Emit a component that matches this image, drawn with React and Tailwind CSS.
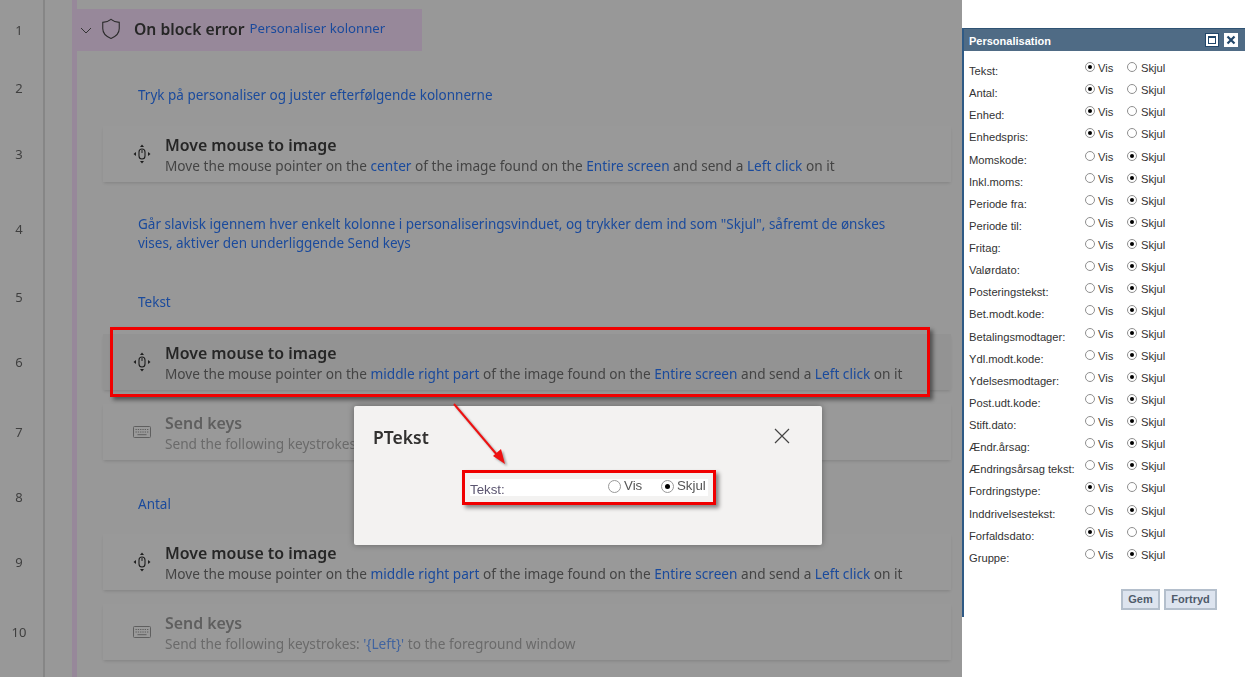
const font = { fontFamily: '"Noto Sans", sans-serif' };

function MouseIcon() {
  return (
    <svg width="18" height="20" viewBox="0 0 18 20" className="shrink-0 text-[#1e1e1e]">
      <rect x="6" y="5" width="6" height="10" rx="3" fill="none" stroke="currentColor" strokeWidth="1.1" />
      <path d="M9 6v3" stroke="currentColor" strokeWidth="1" />
      <path d="M9 0.5l2 2.5H7zM9 19.500l2-2.500H7zM0.500 10L3 8v4zM17.500 10L15 8v4z" fill="currentColor" />
    </svg>
  );
}

function KeyboardIcon() {
  return (
    <svg width="18" height="12" viewBox="0 0 18 12" className="shrink-0 text-[#5f5f5f]">
      <rect x="0.5" y="0.5" width="17" height="11" rx="1" fill="none" stroke="currentColor" />
      <path d="M2.5 3.5h13M2.5 6h13" stroke="currentColor" strokeDasharray="1.3 1" />
      <path d="M4.5 8.7h9" stroke="currentColor" />
    </svg>
  );
}

function Row({ n, h, children }) {
  return (
    <div className={`flex ${h}`}>
      <div className="w-[45px] shrink-0 border-r-2 border-[#868686] flex items-center justify-center pr-[5px] pt-[2px] text-[13px] text-[#3f3f3f]">
        {n}
      </div>
      <div className="w-[27px] shrink-0" />
      <div className="flex-1 min-w-0 border-l-[5px] border-[#97889a] relative flex items-center">{children}</div>
    </div>
  );
}

function Comment({ pt, children }) {
  return <div className={`pl-[61px] pr-[50px] text-[13.5px] leading-[19px] text-[#1a4a9c] ${pt}`}>{children}</div>;
}

function Action({ icon, title, muted, selected, children }) {
  return (
    <div className={`ml-[26px] h-[56px] w-[848px] flex items-center pl-[28px] shadow-[0_2px_3px_-1px_rgba(0,0,0,0.15)] ${selected ? 'bg-[#939393]' : 'bg-[#999999]'}`}>
      <div className="w-[22px] flex justify-center shrink-0">{icon}</div>
      <div className="ml-[12px] min-w-0 pt-[2px]">
        <div className={`text-[15.9px] leading-[21px] font-semibold ${muted ? 'text-[#5f5f5f]' : 'text-[#262626]'}`}>{title}</div>
        <div className={`text-[13.65px] leading-[20px] whitespace-nowrap ${muted ? 'text-[#6a6a6a]' : 'text-[#444444]'}`}>{children}</div>
      </div>
    </div>
  );
}

const B = ({ children }) => <span className="text-[#1a4a9c]">{children}</span>;

const panelRows = [
  ['Tekst:', 1], ['Antal:', 1], ['Enhed:', 1], ['Enhedspris:', 1], ['Momskode:', 0], ['Inkl.moms:', 0],
  ['Periode fra:', 0], ['Periode til:', 0], ['Fritag:', 0], ['Valørdato:', 0], ['Posteringstekst:', 0],
  ['Bet.modt.kode:', 0], ['Betalingsmodtager:', 0], ['Ydl.modt.kode:', 0], ['Ydelsesmodtager:', 0],
  ['Post.udt.kode:', 0], ['Stift.dato:', 0], ['Ændr.årsag:', 0], ['Ændringsårsag tekst:', 0],
  ['Fordringstype:', 1], ['Inddrivelsestekst:', 0], ['Forfaldsdato:', 1], ['Gruppe:', 0],
];

function Radio({ on }) {
  return (
    <span className="w-[10px] h-[10px] rounded-full border border-[#8f8f8f] bg-white flex items-center justify-center shrink-0">
      {on ? <span className="w-[4px] h-[4px] rounded-full bg-black" /> : null}
    </span>
  );
}

function PanelRow({ label, vis }) {
  return (
    <div className="h-[22.14px] flex text-[11.2px] leading-[13px]">
      <div className="w-[121px] pl-[5px] pt-[3px] text-[#333333] whitespace-nowrap">{label}</div>
      <div className="w-[42px] flex items-start gap-[3px] text-[#333333]"><Radio on={vis} />Vis</div>
      <div className="flex items-start gap-[4px] text-[#333333]"><Radio on={!vis} />Skjul</div>
    </div>
  );
}

export default function App() {
  return (
    <div className="relative w-[1245px] h-[677px] overflow-hidden bg-white flex" style={font}>
      <div className="relative w-[962px] h-full shrink-0 bg-[#989898] overflow-hidden blur-[0.3px]">
        <Row n={1} h="h-[60px]">
          <div className="absolute left-[-5px] top-[9px] w-[350px] h-[42px] bg-[#97889a] flex items-center pl-[8px]">
            <svg width="12" height="12" viewBox="0 0 12 12" className="text-[#333]">
              <path d="M1 4l5 5 5-5" fill="none" stroke="currentColor" strokeWidth="1" />
            </svg>
            <svg width="22" height="22" viewBox="0 0 20 20" className="ml-[8px] mb-[3px] text-[#2b2b2b]">
              <path d="M10 1.200c2.200 1.800 4.600 2.700 7.500 2.800v5.600c0 4.200-2.600 7.100-7.500 9-4.900-1.900-7.500-4.800-7.500-9V4c2.900-.1 5.300-1 7.500-2.800z" fill="none" stroke="currentColor" strokeWidth="1" />
            </svg>
            <span className="ml-[12px] text-[15.7px] font-semibold text-[#262626]">On block error</span>
            <span className="ml-[5px] text-[13.2px] text-[#1a4a9c] pb-[3px]">Personaliser kolonner</span>
          </div>
        </Row>
        <Row n={2} h="h-[56px]"><Comment pt="pt-[14px]">Tryk på personaliser og juster efterfølgende kolonnerne</Comment></Row>
        <Row n={3} h="h-[76px]">
          <Action icon={<MouseIcon />} title="Move mouse to image">
            Move the mouse pointer on the <B>center</B> of the image found on the <B>Entire screen</B> and send a <B>Left click</B> on it
          </Action>
        </Row>
        <Row n={4} h="h-[74px]">
          <Comment pt="pt-[10px]">Går slavisk igennem hver enkelt kolonne i personaliseringsvinduet, og trykker dem ind som "Skjul", såfremt de ønskes vises, aktiver den underliggende Send keys</Comment>
        </Row>
        <Row n={5} h="h-[62px]"><Comment pt="pt-[10px]">Tekst</Comment></Row>
        <Row n={6} h="h-[68px]">
          <Action selected icon={<MouseIcon />} title="Move mouse to image">
            Move the mouse pointer on the <B>middle right part</B> of the image found on the <B>Entire screen</B> and send a <B>Left click</B> on it
          </Action>
        </Row>
        <Row n={7} h="h-[72px]">
          <Action muted icon={<KeyboardIcon />} title="Send keys">
            Send the following keystrokes: <span className="text-[#41649f]">'{'{'}Left{'}'}'</span> to the foreground window
          </Action>
        </Row>
        <Row n={8} h="h-[58px]"><Comment pt="pt-[14px]">Antal</Comment></Row>
        <Row n={9} h="h-[72px]">
          <Action icon={<MouseIcon />} title="Move mouse to image">
            Move the mouse pointer on the <B>middle right part</B> of the image found on the <B>Entire screen</B> and send a <B>Left click</B> on it
          </Action>
        </Row>
        <Row n={10} h="h-[68px]">
          <Action muted icon={<KeyboardIcon />} title="Send keys">
            Send the following keystrokes: <span className="text-[#41649f]">'{'{'}Left{'}'}'</span> to the foreground window
          </Action>
        </Row>
        <Row n="" h="h-[20px]" />

        <div className="absolute left-[110px] top-[327px] w-[820px] h-[70px] border-[3px] border-[#f00000] shadow-[3px_3px_4px_rgba(0,0,0,0.45)]" />

        <div className="absolute left-[354px] top-[406px] w-[468px] h-[139px] bg-[#f3f2f1] rounded-[2px] shadow-[0_0_6px_rgba(0,0,0,0.35)]">
          <div className="pl-[19px] pt-[19px] text-[17.5px] leading-[24px] font-semibold text-[#323130]">PTekst</div>
          <svg width="18" height="18" viewBox="0 0 18 18" className="absolute left-[419px] top-[21px] text-[#444]">
            <path d="M2 2l14 14M16 2L2 16" stroke="currentColor" strokeWidth="1.2" />
          </svg>
          <div className="absolute left-[108px] top-[64px] w-[254px] h-[35px] border-[3px] border-[#f00000] shadow-[3px_3px_4px_rgba(0,0,0,0.45)] flex items-center" style={{ fontFamily: '"Liberation Sans", sans-serif' }}>
            <div className="ml-[5px] w-[238px] h-[17px] bg-white flex text-[13.3px] text-[#555]">
              <span className="w-[138px] pt-[4px] leading-[14px] text-[#5b5570]">Tekst:</span>
              <span className="w-[53px] flex items-start gap-[3px] leading-[13px]">
                <span className="w-[13px] h-[13px] mt-px rounded-full border border-[#999] bg-white shrink-0" />Vis
              </span>
              <span className="flex items-start gap-[3px] leading-[13px]">
                <span className="w-[13px] h-[13px] mt-px rounded-full border border-[#999] bg-white flex items-center justify-center shrink-0">
                  <span className="w-[5px] h-[5px] rounded-full bg-black" />
                </span>Skjul
              </span>
            </div>
          </div>
        </div>

        <svg width="70" height="80" viewBox="0 0 70 80" className="absolute left-[445px] top-[396px] drop-shadow-[2px_2px_1px_rgba(0,0,0,0.35)]">
          <path d="M9 8L53 60" stroke="#ee1111" strokeWidth="2" />
          <path d="M60 68L48 60l8-7z" fill="#ee1111" />
        </svg>
      </div>

      <div className="w-[283px] h-[589px] mt-[28px] border-l-2 border-[#2f5a85] bg-white shrink-0 flex flex-col" style={{ fontFamily: '"Liberation Sans", sans-serif' }}>
        <div className="h-[23px] bg-[#4f6b85] border-t border-[#2f5373] flex items-center justify-between pl-[5px] pr-[7px]">
          <span className="text-[11px] font-bold text-white pt-[2px]">Personalisation</span>
          <div className="flex gap-[5px]">
            <span className="w-[14px] h-[14px] bg-white border border-[#22476a] p-[2px] flex">
              <span className="flex-1 border border-[#22476a] border-t-[2px]" />
            </span>
            <span className="w-[14px] h-[14px] bg-white flex items-center justify-center">
              <svg width="10" height="10" viewBox="0 0 10 10"><path d="M1.500 1.500l7 7M8.500 1.500l-7 7" stroke="#22476a" strokeWidth="2.200" /></svg>
            </span>
          </div>
        </div>
        <div className="pt-[11px]">
          {panelRows.map(([label, vis]) => <PanelRow key={label} label={label} vis={!!vis} />)}
        </div>
        <div className="flex gap-[4px] pl-[157px] pt-[18px]">
          <button className="w-[39px] h-[21px] bg-[#dde4ef] border-2 border-[#b4bfcc] text-[11px] font-bold text-[#4f5b6b]">Gem</button>
          <button className="w-[53px] h-[21px] bg-[#dde4ef] border-2 border-[#b4bfcc] text-[11px] font-bold text-[#4f5b6b]">Fortryd</button>
        </div>
      </div>
    </div>
  );
}
